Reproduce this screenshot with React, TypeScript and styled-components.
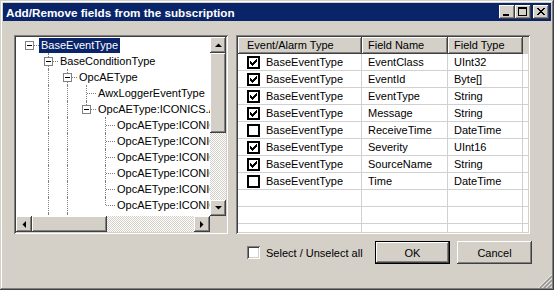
import styled, { createGlobalStyle } from "styled-components";

const GlobalStyle = createGlobalStyle`
    html, body {
        margin: 0;
        padding: 0;
        width: 554px;
        height: 290px;
        overflow: hidden;
        background: #d4d0c8;
    }
    body {
        font-family: "Liberation Sans", Arial, sans-serif;
        font-size: 11px;
        color: #000;
    }
    * {
        box-sizing: border-box;
    }
`;

const raised = `box-shadow: inset -1px -1px #404040, inset 1px 1px #ffffff, inset -2px -2px #808080, inset 2px 2px #d4d0c8;`;
const sunken = `box-shadow: inset 1px 1px #808080, inset -1px -1px #ffffff, inset 2px 2px #404040, inset -2px -2px #d4d0c8;`;
const GRID = "#d0d0d0";

const Window = styled.div`
    position: relative;
    width: 554px;
    height: 290px;
    padding: 3px;
    background: #d4d0c8;
    box-shadow: inset -1px -1px #404040, inset 1px 1px #d4d0c8, inset -2px -2px #808080, inset 2px 2px #ffffff;
    display: flex;
    flex-direction: column;
`;

const TitleBar = styled.div`
    height: 18px;
    flex: none;
    background: #0a246a;
    display: flex;
    align-items: center;
    padding: 0 2px 0 3px;
`;

const Title = styled.div`
    flex: 1;
    color: #ffffff;
    font-weight: bold;
    font-size: 11.7px;
    white-space: nowrap;
`;

const CaptionButtons = styled.div`
    display: flex;
`;

const CaptionButton = styled.div<{ $gap?: boolean }>`
    width: 16px;
    height: 14px;
    margin-left: ${(p) => (p.$gap ? 2 : 0)}px;
    background: #d4d0c8;
    ${raised}
    display: flex;
`;

const Body = styled.div`
    display: flex;
    gap: 8px;
    margin-top: 14px;
    padding-left: 11px;
`;

/* ---------- tree ---------- */

const TreePanel = styled.div`
    width: 214px;
    height: 199px;
    padding: 2px;
    background: #ffffff;
    ${sunken}
    display: grid;
    grid-template-columns: minmax(0, 1fr) 16px;
    grid-template-rows: minmax(0, 1fr) 16px;
`;

const TreeViewport = styled.div`
    overflow: hidden;
    padding-left: 4px;
    background: #ffffff;
`;

const TreeRow = styled.div`
    display: flex;
    align-items: center;
    height: 16px;
    white-space: nowrap;
`;

const Guide = styled.div<{ $line: boolean }>`
    position: relative;
    width: 19px;
    height: 16px;
    flex: none;
    ${(p) =>
        p.$line &&
        `&::before {
            content: "";
            position: absolute;
            left: 9px;
            top: 0;
            bottom: 0;
            border-left: 1px dotted #808080;
        }`}
`;

const Joint = styled.div<{ $root: boolean; $hasNext: boolean }>`
    position: relative;
    width: 19px;
    height: 16px;
    flex: none;
    ${(p) =>
        !p.$root &&
        `&::before {
            content: "";
            position: absolute;
            left: 9px;
            top: 0;
            height: ${p.$hasNext ? 16 : 8}px;
            border-left: 1px dotted #808080;
        }`}
    &::after {
        content: "";
        position: absolute;
        left: 10px;
        top: 8px;
        width: 9px;
        border-top: 1px dotted #808080;
    }
`;

const Expander = styled.span`
    position: absolute;
    z-index: 1;
    left: 5px;
    top: 4px;
    width: 9px;
    height: 9px;
    border: 1px solid #808080;
    background: #ffffff;
    &::after {
        content: "";
        position: absolute;
        left: 1px;
        top: 3px;
        width: 5px;
        height: 1px;
        background: #000;
    }
`;

const NodeLabel = styled.span<{ $selected?: boolean }>`
    height: 15px;
    line-height: 15px;
    padding: 0 2px;
    background: ${(p) => (p.$selected ? "#0a246a" : "transparent")};
    color: ${(p) => (p.$selected ? "#ffffff" : "#000000")};
`;

const VScroll = styled.div`
    display: flex;
    flex-direction: column;
`;

const HScroll = styled.div`
    display: flex;
`;

const ScrollCorner = styled.div`
    background: #d4d0c8;
`;

const ScrollButton = styled.div`
    width: 16px;
    height: 16px;
    flex: none;
    background: #d4d0c8;
    ${raised}
    display: flex;
    align-items: center;
    justify-content: center;
`;

const Thumb = styled.div<{ $size: number; $vertical?: boolean }>`
    flex: none;
    background: #d4d0c8;
    ${raised}
    ${(p) => (p.$vertical ? `height: ${p.$size}px;` : `width: ${p.$size}px;`)}
`;

const Track = styled.div`
    flex: 1;
    background: repeating-conic-gradient(#d4d0c8 0 25%, #ffffff 0 50%) 0 0 / 2px 2px;
`;

/* ---------- list ---------- */

const RightColumn = styled.div`
    width: 296px;
    display: flex;
    flex-direction: column;
`;

const ListPanel = styled.div`
    width: 294px;
    height: 199px;
    padding: 2px;
    background: #ffffff;
    ${sunken}
    display: flex;
    flex-direction: column;
    overflow: hidden;
`;

const HeaderRow = styled.div`
    display: flex;
    height: 17px;
    flex: none;
    background: #d4d0c8;
`;

const HeaderCell = styled.div<{ $width: number; $pad: number }>`
    width: ${(p) => p.$width}px;
    padding-left: ${(p) => p.$pad}px;
    flex: none;
    line-height: 16px;
    white-space: nowrap;
    box-shadow: inset -1px -1px #404040, inset 1px 1px #ffffff, inset -2px -2px #808080;
`;

const Rows = styled.div`
    flex: 1;
    overflow: hidden;
`;

const Row = styled.div`
    display: flex;
    height: 17px;
    border-bottom: 1px solid ${GRID};
`;

const Cell = styled.div<{ $width: number; $pad: number }>`
    width: ${(p) => p.$width}px;
    padding-left: ${(p) => p.$pad}px;
    flex: none;
    display: flex;
    align-items: center;
    white-space: nowrap;
    overflow: hidden;
    border-right: 1px solid ${GRID};
`;

const FillCell = styled.div`
    flex: 1;
`;

const ListCheck = styled.span`
    width: 13px;
    height: 13px;
    flex: none;
    margin-right: 6px;
    border: 2px solid #000000;
    background: #ffffff;
    display: flex;
    align-items: center;
    justify-content: center;
`;

/* ---------- footer ---------- */

const Footer = styled.div`
    display: flex;
    align-items: center;
    height: 23px;
    margin-top: 7px;
    padding-left: 11px;
    gap: 7px;
`;

const CheckLabel = styled.label`
    flex: 1;
    display: flex;
    align-items: center;
    gap: 6px;
`;

const SunkenCheck = styled.span`
    width: 13px;
    height: 13px;
    background: #ffffff;
    ${sunken}
`;

const Button = styled.button<{ $default?: boolean }>`
    width: 75px;
    height: 23px;
    padding: 0;
    font: inherit;
    color: #000;
    background: #d4d0c8;
    border: ${(p) => (p.$default ? "1px solid #000" : "none")};
    ${raised}
`;

const Grip = styled.svg`
    position: absolute;
    right: 2px;
    bottom: 2px;
`;

/* ---------- drawings ---------- */

function Arrow({ dir }: { dir: "up" | "down" | "left" | "right" }) {
    const pts = {
        up: "0,4 7,4 3.5,0.5",
        down: "0,0 7,0 3.5,3.5",
        left: "4,0 4,7 0.5,3.5",
        right: "0,0 0,7 3.5,3.5",
    }[dir];
    const vertical = dir === "up" || dir === "down";
    return (
        <svg width={vertical ? 7 : 4} height={vertical ? 4 : 7}>
            <polygon points={pts} fill="#000" />
        </svg>
    );
}

const CHECK_PIXELS: [number, number, number][] = [
    [6, 0, 1],
    [5, 1, 2],
    [0, 2, 1],
    [4, 2, 3],
    [0, 3, 2],
    [3, 3, 3],
    [0, 4, 5],
    [1, 5, 3],
    [2, 6, 1],
];

function CheckMark() {
    return (
        <svg width="7" height="7" shapeRendering="crispEdges">
            {CHECK_PIXELS.map(([x, y, w]) => (
                <rect key={`${x}-${y}`} x={x} y={y} width={w} height={1} fill="#000" />
            ))}
        </svg>
    );
}

function CloseGlyph() {
    const rows = [0, 1, 2, 3, 4, 5, 6];
    return (
        <svg width="16" height="14" shapeRendering="crispEdges">
            {rows.map((i) => (
                <g key={i}>
                    <rect x={4 + i} y={3 + i} width={2} height={1} fill="#000" />
                    <rect x={10 - i} y={3 + i} width={2} height={1} fill="#000" />
                </g>
            ))}
        </svg>
    );
}

function MinGlyph() {
    return (
        <svg width="16" height="14" shapeRendering="crispEdges">
            <rect x={4} y={9} width={6} height={2} fill="#000" />
        </svg>
    );
}

function MaxGlyph() {
    return (
        <svg width="16" height="14" shapeRendering="crispEdges">
            <rect x={3} y={2} width={9} height={2} fill="#000" />
            <rect x={3} y={2} width={1} height={9} fill="#000" />
            <rect x={11} y={2} width={1} height={9} fill="#000" />
            <rect x={3} y={10} width={9} height={1} fill="#000" />
        </svg>
    );
}

/* ---------- data ---------- */

interface TreeItem {
    label: string;
    guides: boolean[];
    hasNext: boolean;
    expanded?: boolean;
    selected?: boolean;
}

const TREE: TreeItem[] = [
    { label: "BaseEventType", guides: [], hasNext: false, expanded: true, selected: true },
    { label: "BaseConditionType", guides: [false], hasNext: true, expanded: true },
    { label: "OpcAEType", guides: [false, true], hasNext: true, expanded: true },
    { label: "AwxLoggerEventType", guides: [false, true, true], hasNext: true },
    { label: "OpcAEType:ICONICS.AlarmType", guides: [false, true, true], hasNext: false, expanded: true },
    { label: "OpcAEType:ICONICS.Condition", guides: [false, true, true, false], hasNext: true },
    { label: "OpcAEType:ICONICS.Discrete", guides: [false, true, true, false], hasNext: true },
    { label: "OpcAEType:ICONICS.Deviation", guides: [false, true, true, false], hasNext: true },
    { label: "OpcAEType:ICONICS.Limit", guides: [false, true, true, false], hasNext: true },
    { label: "OpcAEType:ICONICS.RateOfChange", guides: [false, true, true, false], hasNext: true },
    { label: "OpcAEType:ICONICS.Tracking", guides: [false, true, true, false], hasNext: false },
    { label: "OACAlarmNewType", guides: [false, true], hasNext: true },
];

const COLUMNS = [
    { title: "Event/Alarm Type", width: 124, pad: 9 },
    { title: "Field Name", width: 86, pad: 6 },
    { title: "Field Type", width: 75, pad: 6 },
];

const FIELDS = [
    { type: "BaseEventType", name: "EventClass", dataType: "UInt32", checked: true },
    { type: "BaseEventType", name: "EventId", dataType: "Byte[]", checked: true },
    { type: "BaseEventType", name: "EventType", dataType: "String", checked: true },
    { type: "BaseEventType", name: "Message", dataType: "String", checked: true },
    { type: "BaseEventType", name: "ReceiveTime", dataType: "DateTime", checked: false },
    { type: "BaseEventType", name: "Severity", dataType: "UInt16", checked: true },
    { type: "BaseEventType", name: "SourceName", dataType: "String", checked: true },
    { type: "BaseEventType", name: "Time", dataType: "DateTime", checked: false },
];

const EMPTY_ROWS = 3;

function EventTree() {
    return (
        <TreePanel>
            <TreeViewport>
                {TREE.map((item, i) => (
                    <TreeRow key={i}>
                        {item.guides.map((line, g) => (
                            <Guide key={g} $line={line} />
                        ))}
                        <Joint $root={item.guides.length === 0} $hasNext={item.hasNext}>
                            {item.expanded && <Expander />}
                        </Joint>
                        <NodeLabel $selected={item.selected}>{item.label}</NodeLabel>
                    </TreeRow>
                ))}
            </TreeViewport>
            <VScroll>
                <ScrollButton>
                    <Arrow dir="up" />
                </ScrollButton>
                <Thumb $vertical $size={80} />
                <Track />
                <ScrollButton>
                    <Arrow dir="down" />
                </ScrollButton>
            </VScroll>
            <HScroll>
                <ScrollButton>
                    <Arrow dir="left" />
                </ScrollButton>
                <Thumb $size={75} />
                <Track />
                <ScrollButton>
                    <Arrow dir="right" />
                </ScrollButton>
            </HScroll>
            <ScrollCorner />
        </TreePanel>
    );
}

function FieldList() {
    return (
        <ListPanel>
            <HeaderRow>
                {COLUMNS.map((c) => (
                    <HeaderCell key={c.title} $width={c.width} $pad={c.pad}>
                        {c.title}
                    </HeaderCell>
                ))}
            </HeaderRow>
            <Rows>
                {FIELDS.map((f) => (
                    <Row key={f.name}>
                        <Cell $width={COLUMNS[0].width} $pad={COLUMNS[0].pad}>
                            <ListCheck>{f.checked && <CheckMark />}</ListCheck>
                            {f.type}
                        </Cell>
                        <Cell $width={COLUMNS[1].width} $pad={COLUMNS[1].pad}>
                            {f.name}
                        </Cell>
                        <Cell $width={COLUMNS[2].width} $pad={COLUMNS[2].pad}>
                            {f.dataType}
                        </Cell>
                        <FillCell />
                    </Row>
                ))}
                {Array.from({ length: EMPTY_ROWS }, (_, i) => (
                    <Row key={`empty-${i}`}>
                        {COLUMNS.map((c) => (
                            <Cell key={c.title} $width={c.width} $pad={c.pad} />
                        ))}
                        <FillCell />
                    </Row>
                ))}
            </Rows>
        </ListPanel>
    );
}

export default function App() {
    return (
        <>
            <GlobalStyle />
            <Window>
                <TitleBar>
                    <Title>Add/Remove fields from the subscription</Title>
                    <CaptionButtons>
                        <CaptionButton>
                            <MinGlyph />
                        </CaptionButton>
                        <CaptionButton>
                            <MaxGlyph />
                        </CaptionButton>
                        <CaptionButton $gap>
                            <CloseGlyph />
                        </CaptionButton>
                    </CaptionButtons>
                </TitleBar>
                <Body>
                    <EventTree />
                    <RightColumn>
                        <FieldList />
                        <Footer>
                            <CheckLabel>
                                <SunkenCheck />
                                Select / Unselect all
                            </CheckLabel>
                            <Button $default>OK</Button>
                            <Button>Cancel</Button>
                        </Footer>
                    </RightColumn>
                </Body>
                <Grip width="14" height="14">
                    {[0, 4, 8].map((o) => (
                        <g key={o}>
                            <line x1={14} y1={o + 0.5} x2={o + 0.5} y2={14} stroke="#ffffff" />
                            <line x1={14} y1={o + 1.5} x2={o + 1.5} y2={14} stroke="#808080" />
                            <line x1={14} y1={o + 2.5} x2={o + 2.5} y2={14} stroke="#808080" />
                        </g>
                    ))}
                </Grip>
            </Window>
        </>
    );
}
